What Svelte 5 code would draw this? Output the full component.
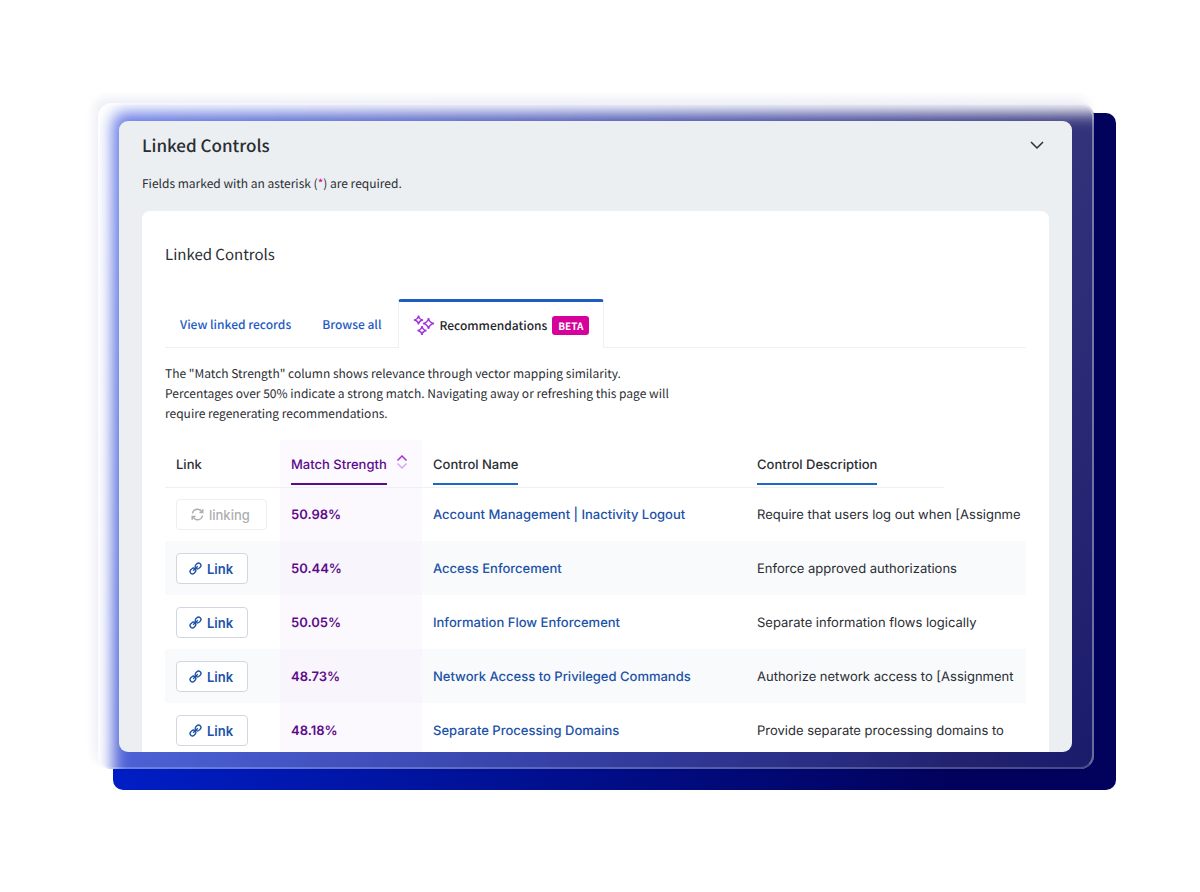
<script>
    let rows = $state([
        { match: '50.98%', name: 'Account Management | Inactivity Logout', description: 'Require that users log out when [Assignme', linking: true },
        { match: '50.44%', name: 'Access Enforcement', description: 'Enforce approved authorizations' },
        { match: '50.05%', name: 'Information Flow Enforcement', description: 'Separate information flows logically' },
        { match: '48.73%', name: 'Network Access to Privileged Commands', description: 'Authorize network access to [Assignment' },
        { match: '48.18%', name: 'Separate Processing Domains', description: 'Provide separate processing domains to' },
    ]);

    const link = (row) => {
        row.linking = true;
    };
</script>

<main class="stage">
    <div class="backdrop"></div>
    <div class="glass">
        <section class="panel">
            <header class="panel-header">
                <h1>Linked Controls</h1>
                <button class="collapse" aria-label="Collapse section">
                    <svg width="16" height="10" viewBox="0 0 16 10"><path d="M2 2l6 6 6-6" /></svg>
                </button>
            </header>
            <p class="required-note">Fields marked with an asterisk (<span>*</span>) are required.</p>

            <div class="card">
                <h2>Linked Controls</h2>

                <nav class="tabs">
                    <a class="tab" href="#linked">View linked records</a>
                    <a class="tab" href="#browse">Browse all</a>
                    <a class="tab active" href="#recommendations" aria-current="page">
                        <svg width="22" height="22" viewBox="0 0 22 22">
                            <path d="M5.5 1.5Q6 5.5 10 6 6 6.500 5.500 10.500 5 6.500 1 6 5 5.500 5.500 1.500z" />
                            <path d="M15.500 4Q16.200 8.800 21 9.500 16.200 10.200 15.500 15 14.800 10.200 10 9.500 14.800 8.800 15.500 4z" />
                            <path d="M9 12Q9.500 16 13.500 16.500 9.500 17 9 21 8.500 17 4.500 16.500 8.500 16 9 12z" />
                        </svg>
                        Recommendations
                        <span class="badge">BETA</span>
                    </a>
                </nav>

                <p class="hint">
                    The "Match Strength" column shows relevance through vector mapping similarity.
                    Percentages over 50% indicate a strong match. Navigating away or refreshing this page will
                    require regenerating recommendations.
                </p>

                <div class="table-wrap">
                    <table>
                        <thead>
                            <tr>
                                <th class="col-link"><span class="label">Link</span></th>
                                <th class="col-match">
                                    <span class="label sortable">Match Strength</span>
                                    <svg width="12" height="14" viewBox="0 0 12 14">
                                        <path d="M1.500 5.500L6 1l4.500 4.500" />
                                        <path class="down" d="M1.500 8.500L6 13l4.500-4.500" />
                                    </svg>
                                </th>
                                <th class="col-name"><span class="label sortable">Control Name</span></th>
                                <th class="col-description"><span class="label sortable">Control Description</span></th>
                                <th class="col-rest"></th>
                            </tr>
                        </thead>
                        <tbody>
                            {#each rows as row}
                                <tr>
                                    <td>
                                        {#if row.linking}
                                            <button class="link-button" disabled>
                                                <svg width="13" height="13" viewBox="0 0 13 13">
                                                    <path d="M1.500 5.500A5 5 0 0 1 11 4.200M11.500 7.500A5 5 0 0 1 2 8.800" />
                                                    <path d="M11.800 1.200v3.300H8.500M1.200 11.800V8.500h3.300" />
                                                </svg>
                                                linking
                                            </button>
                                        {:else}
                                            <button class="link-button" onclick={() => link(row)}>
                                                <svg width="13" height="13" viewBox="0 0 14 14">
                                                    <rect x="6.500" y="1.800" width="6.500" height="5" rx="2.500" transform="rotate(-45 9.750 4.300)" />
                                                    <rect x="1" y="7.200" width="6.500" height="5" rx="2.500" transform="rotate(-45 4.250 9.700)" />
                                                    <path d="M4.500 9.500l5-5" />
                                                </svg>
                                                Link
                                            </button>
                                        {/if}
                                    </td>
                                    <td class="match">{row.match}</td>
                                    <td><a href="#control">{row.name}</a></td>
                                    <td colspan="2">{row.description}</td>
                                </tr>
                            {/each}
                        </tbody>
                    </table>
                </div>
            </div>
        </section>
    </div>
</main>

<style>
    :global(body) {
        margin: 0;
        background: #fff;
    }

    .stage {
        --blue: linear-gradient(100deg, #0022d4, #02025c 85%);
        display: grid;
        padding: 103px 84px 101px 98px;
        color: #2a2d33;
        font-family: 'Noto Sans CJK SC', sans-serif;
        font-size: 12px;
        text-rendering: geometricPrecision;
    }

    .backdrop {
        grid-area: 1 / 1;
        margin: 10px 0 0 15px;
        border-radius: 10px;
        background: var(--blue);
    }

    .glass {
        position: relative;
        grid-area: 1 / 1;
        overflow: hidden;
        min-width: 0;
        margin: 0 22px 21px 0;
        padding: 18px 22px 17px 21px;
        border-radius: 14px;
        background: #fff;
        box-shadow: -4px -5px 10px rgba(30, 40, 140, 0.08);
    }

    /* the backdrop again, blurred, as it shows through the glass */
    .glass::before {
        position: absolute;
        inset: 10px -22px -21px 15px;
        border-radius: 10px;
        background: var(--blue);
        filter: blur(8px);
        content: '';
    }

    .glass::after {
        position: absolute;
        inset: 0;
        border: 2px solid rgba(255, 255, 255, 0.2);
        border-top-color: rgba(255, 255, 255, 0.3);
        border-right-color: rgba(255, 255, 255, 0.35);
        border-radius: 14px;
        background: linear-gradient(125deg, rgba(255, 255, 255, 0.4), rgba(255, 255, 255, 0.22) 60%, rgba(255, 255, 255, 0.1));
        background-origin: border-box;
        content: '';
    }

    .panel {
        position: relative;
        z-index: 1;
        overflow: hidden;
        padding: 0 23px;
        border-radius: 9px;
        background: #ebeff2;
    }

    .panel-header {
        display: flex;
        align-items: center;
        justify-content: space-between;
        height: 48px;
    }

    h1 {
        margin: 0;
        font-size: 17px;
        font-weight: 500;
        line-height: 24px;
    }

    .collapse {
        padding: 4px;
        border: 0;
        background: none;
        color: inherit;
    }

    svg {
        fill: none;
        stroke: currentColor;
        stroke-width: 1.5;
    }

    .required-note {
        margin: 5px 0 17px;
        line-height: 20px;
    }

    .required-note span {
        color: #d6009a;
    }

    .card {
        padding: 32px 23px 0;
        border-radius: 8px 8px 0 0;
        background: #fff;
    }

    h2 {
        margin: 0 0 32px;
        font-size: 15px;
        font-weight: 400;
        line-height: 24px;
    }

    .tabs {
        display: flex;
        gap: 1px;
        box-shadow: inset 0 -1px #eef0f4;
        font-weight: 500;
    }

    .tab {
        display: flex;
        align-items: center;
        gap: 5px;
        height: 46px;
        padding: 2px 15px 0;
        color: #1f5bc4;
        text-decoration: none;
    }

    .tab.active {
        padding: 0 14px;
        border: solid #eef0f4;
        border-width: 3px 1px 0;
        border-top-color: #1f5bc4;
        border-radius: 3px 3px 0 0;
        background: #fff;
        color: #24272d;
    }

    .tab svg {
        color: #a233dd;
    }

    .badge {
        padding: 0 6px;
        border-radius: 3px;
        background: #d6009a;
        color: #fff;
        font-size: 10px;
        font-weight: 700;
        line-height: 19px;
    }

    .hint {
        max-width: 520px;
        margin: 16px 0;
        line-height: 20px;
    }

    .table-wrap {
        overflow: hidden;
        margin-bottom: -5px;
    }

    table {
        width: 100%;
        table-layout: fixed;
        border-collapse: collapse;
        font-family: Inter, sans-serif;
        font-size: 13px;
        white-space: nowrap;
    }

    th {
        box-sizing: border-box;
        height: 47px;
        padding: 0 11px;
        border-bottom: 1px solid #eef0f4;
        font-weight: 500;
        text-align: left;
        vertical-align: bottom;
    }

    .col-link {
        width: 115px;
    }

    .col-match {
        width: 142px;
        background: #fcf9ff;
        color: #5c0a8a;
    }

    .col-match svg {
        margin-left: 6px;
        color: #a233dd;
    }

    .col-match .down {
        opacity: 0.4;
    }

    .col-name {
        width: 324px;
    }

    .col-description {
        width: 198px;
    }

    .col-rest {
        border-bottom: 0;
    }

    .label {
        display: inline-block;
        margin-bottom: 2px;
        padding-bottom: 8px;
        border-bottom: 2px solid transparent;
        line-height: 20px;
    }

    .sortable {
        border-color: #1f68c4;
    }

    .col-match .sortable {
        border-color: #5c0a8a;
    }

    td {
        box-sizing: border-box;
        height: 54px;
        padding: 1px 11px 0;
    }

    tbody tr:nth-child(even) {
        background: #f8fafb;
    }

    .match {
        background: #fbf8fe;
        color: #5c0a8a;
        font-weight: 600;
    }

    tbody tr:nth-child(even) .match {
        background: #f8f5fc;
    }

    td a {
        color: #1c52a8;
        font-weight: 500;
        text-decoration: none;
    }

    .link-button {
        display: flex;
        align-items: center;
        gap: 5px;
        height: 31px;
        padding: 0 14px 0 12px;
        border: 1px solid #d3d6e0;
        border-radius: 4px;
        background: #fff;
        color: #1c52a8;
        font: 600 13px Inter, sans-serif;
    }

    .link-button:disabled {
        padding: 0 16px 0 14px;
        border-color: #eceef2;
        color: #adafb3;
        font-weight: 500;
    }
</style>
